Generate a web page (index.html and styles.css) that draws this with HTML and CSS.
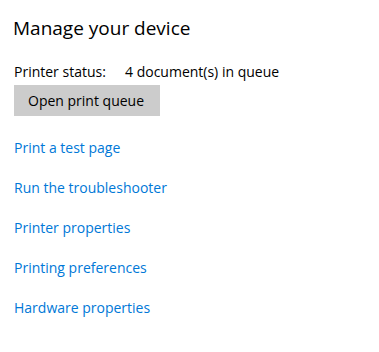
FILE: index.html
```html
<!DOCTYPE html>
<html lang="en">
<head>
    <meta charset="UTF-8">
    <meta name="viewport" content="width=device-width, initial-scale=1.0">
    <title>Manage your device</title>
    <link rel="stylesheet" href="styles.css">
</head>
<body>
    <div class="panel">
        <h1 class="heading">Manage your device</h1>
        <div class="status">
            <span class="status-label">Printer status:</span>
            <span class="status-value">4 document(s) in queue</span>
        </div>
        <button class="queue-btn" type="button">Open print queue</button>
        <div class="links">
            <a href="#" class="link">Print a test page</a>
            <a href="#" class="link">Run the troubleshooter</a>
            <a href="#" class="link">Printer properties</a>
            <a href="#" class="link">Printing preferences</a>
            <a href="#" class="link">Hardware properties</a>
        </div>
    </div>
</body>
</html>
```

FILE: styles.css
```css
*{
    padding: 0px;
    margin: 0px;
    box-sizing: border-box;
    font-family: "Open Sans", "Noto Sans", sans-serif;
}
body{
    background-color: #ffffff;
    color: #000000;
}
.panel{
    display: flex;
    flex-direction: column;
    align-items: flex-start;
    padding: 14px 0 0 14px;
}
.heading{
    font-size: 19px;
    font-weight: 400;
    line-height: 28px;
    margin-left: -1px;
}
.status{
    display: flex;
    font-size: 14px;
    line-height: 20px;
    margin-top: 20px;
}
.status-label{
    width: 111px;
}
.queue-btn{
    margin-top: 3px;
    width: 146px;
    height: 31px;
    padding: 0 14px;
    text-align: left;
    border: none;
    background-color: #cccccc;
    color: #000000;
    font-size: 14px;
}
.links{
    display: flex;
    flex-direction: column;
    align-items: flex-start;
    gap: 20px;
    margin-top: 22px;
}
.link{
    font-size: 14px;
    line-height: 20px;
    color: #0078d7;
    text-decoration: none;
}
```
